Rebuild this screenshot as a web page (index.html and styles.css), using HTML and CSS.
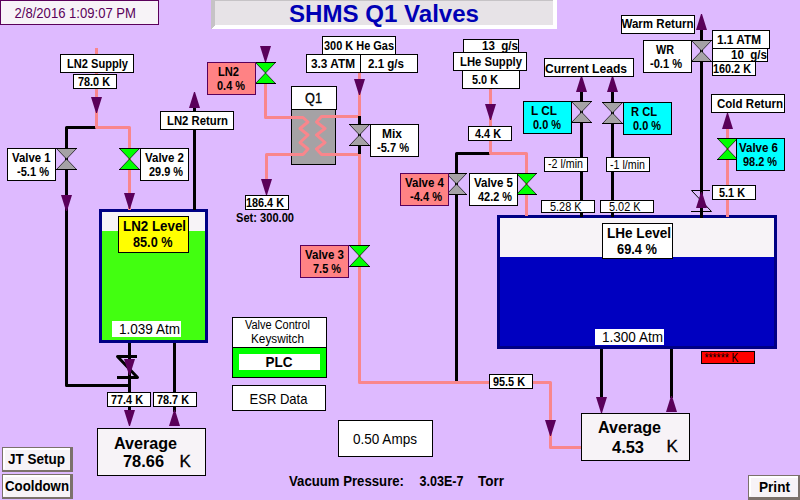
FILE: index.html
```html
<!DOCTYPE html>
<html lang="en">
<head>
<meta charset="utf-8">
<title>SHMS Q1 Valves</title>
<link rel="stylesheet" href="styles.css">
</head>
<body>
<svg class="mimic" width="800" height="500" viewBox="0 0 800 500">
  <defs>
    <path id="down" class="arrow" d="M-5.5 0H5.5L.5 16H-.5Z"/>
    <path id="up" class="arrow" d="M-5.5 16H5.5L.5 0H-.5Z"/>
    <g id="valve">
      <path d="M-10 0H10L-10 21H10Z"/>
      <path class="edge" d="M-10.5 0H10.5M-10.5 21H10.5"/>
    </g>
  </defs>

  <!-- Title bar -->
  <g class="shapes">
    <rect class="pale purple-line" x=".5" y=".5" width="158" height="24"/>
    <path fill="#c6c3c6" d="M211 0H557V29H211Z"/>
    <path fill="#fff" d="M211 29L215 25H553V0H557V29Z"/>
    <rect fill="#e7e3e7" x="215" y="1" width="338" height="24"/>
  </g>
  <text class="date" x="14.5" y="17.500" textLength="121.500">2/8/2016 1:09:07 PM</text>
  <text class="title" x="289" y="22" textLength="190">SHMS Q1 Valves</text>

  <!-- Tanks -->
  <g class="shapes">
    <rect fill="#000084" x="99" y="209" width="109" height="134"/>
    <rect fill="#f7f3f7" x="102" y="212" width="103" height="128"/>
    <rect fill="#42ff10" x="102" y="231" width="103" height="109"/>
    <rect fill="#000084" x="497" y="215" width="280" height="134"/>
    <rect fill="#f7f3f7" x="500" y="218" width="274" height="128"/>
    <rect fill="#0000c0" x="500" y="257" width="274" height="89"/>
    <rect fill="#a5a2a5" stroke="#000" x="291.500" y="109.500" width="44" height="55"/>
  </g>

  <!-- Pipes -->
  <g class="pipe cold">
    <path d="M96.500 127.500H66.500V385.500H129.500"/>
    <path d="M194.500 107V210M129.500 343V412M174.500 343V412"/>
    <path d="M490.500 153.500H456.500V382"/>
    <path d="M581.500 92V217M612.500 92V217M701.500 29V218"/>
    <path d="M601.500 349V398M671.500 349V398"/>
    <path d="M137 356.500H117.500L137.500 377.500H117"/>
  </g>
  <g class="pipe supply">
    <path d="M96.500 48V127.500H129.500V210"/>
    <path d="M265.500 84V117.500H303L308 122L300 128.500L308 135L300 142.500L308 149L303 154.500H266.500V180"/>
    <path d="M359.500 72V116.500H321.500L316.500 122L325 128.500L316.500 135L325 142.500L316.500 149L321.500 154.500H359.500V382.500H550.500V447.500H581"/>
    <path d="M490.500 88V153.500H526.500V216M727.500 128V217"/>
  </g>
  <path class="edge" fill="none" d="M710 190.500H691.500L711.500 211.500H691"/>
  <path class="pipe cold" d="M359.500 116V154"/>

  <!-- Flow arrows -->
  <use href="#down" x="96.500" y="97"/><use href="#down" x="265.500" y="46"/>
  <use href="#down" x="359.500" y="79"/><use href="#down" x="490.500" y="104"/>
  <use href="#down" x="66.500" y="195"/><use href="#down" x="129.500" y="193"/>
  <use href="#down" x="266.500" y="179"/><use href="#down" x="129.500" y="359"/>
  <use href="#down" x="129.500" y="410"/><use href="#down" x="550.500" y="420"/>
  <use href="#down" x="601.500" y="397"/>
  <use href="#up" x="194.500" y="92"/><use href="#up" x="581.500" y="76"/>
  <use href="#up" x="612.500" y="76"/><use href="#up" x="701.500" y="14"/>
  <use href="#up" x="727.500" y="113"/><use href="#up" x="701.500" y="192"/>
  <use href="#up" x="174.500" y="410"/><use href="#up" x="671.500" y="396"/>

  <!-- Valves -->
  <g class="closed">
    <use href="#valve" x="66.500" y="148.500"/><use href="#valve" x="359.500" y="124.500"/>
    <use href="#valve" x="456.500" y="173.500"/><use href="#valve" x="581.500" y="101.500"/>
    <use href="#valve" x="612.500" y="102.500"/><use href="#valve" x="701.500" y="40.500"/>
  </g>
  <g class="open">
    <use href="#valve" x="129.500" y="148.500"/><use href="#valve" x="265.500" y="62.500"/>
    <use href="#valve" x="359.500" y="245.500"/><use href="#valve" x="526.500" y="173.500"/>
    <use href="#valve" x="727.500" y="138.500"/>
  </g>

  <!-- Label boxes -->
  <g class="shapes box">
    <rect x="60.500" y="54.500" width="73" height="18"/>
    <rect x="73.500" y="74.500" width="43" height="14"/>
    <rect x="160.500" y="111.500" width="73" height="18"/>
    <rect x="7.500" y="148.500" width="48" height="32"/>
    <rect x="140.500" y="148.500" width="48" height="32"/>
    <rect class="yellow" x="118.500" y="216.500" width="70" height="36"/>
    <rect class="bare" x="112" y="321" width="69" height="16"/>
    <rect x="107.500" y="392.500" width="43" height="14"/>
    <rect x="153.500" y="392.500" width="43" height="14"/>
    <rect class="pale" x="97.500" y="428.500" width="108" height="47"/>

    <rect class="alarm" x="207.500" y="62.500" width="48" height="32"/>
    <rect x="291.500" y="86.500" width="45" height="23"/>
    <rect x="322.500" y="36.500" width="73" height="18"/>
    <rect x="306.500" y="54.500" width="54" height="18"/>
    <rect x="360.500" y="54.500" width="57" height="18"/>
    <rect x="370.500" y="124.500" width="48" height="32"/>
    <rect x="245.500" y="195.500" width="43" height="14"/>
    <rect class="alarm" x="300.500" y="245.500" width="48" height="32"/>

    <rect x="463.500" y="39.500" width="55" height="14"/>
    <rect x="462.500" y="70.500" width="57" height="18"/>
    <rect x="453.500" y="52.500" width="73" height="18"/>
    <rect x="468.500" y="126.500" width="43" height="14"/>
    <rect class="alarm" x="400.500" y="173.500" width="48" height="32"/>
    <rect x="469.500" y="173.500" width="48" height="32"/>
    <rect x="544.500" y="58.500" width="89" height="18"/>
    <rect class="cyan" x="523.500" y="101.500" width="48" height="32"/>
    <rect class="cyan" x="623.500" y="102.500" width="48" height="32"/>
    <rect x="544.500" y="157.500" width="43" height="14"/>
    <rect x="606.500" y="157.500" width="43" height="14"/>
    <rect x="541.500" y="200.500" width="53" height="12"/>
    <rect x="600.500" y="200.500" width="53" height="12"/>

    <rect x="621.500" y="15.500" width="73" height="18"/>
    <rect x="643.500" y="40.500" width="48" height="32"/>
    <rect x="712.500" y="61.500" width="43" height="14"/>
    <rect x="712.500" y="48.500" width="55" height="13"/>
    <rect x="712.500" y="30.500" width="57" height="18"/>
    <rect x="711.500" y="94.500" width="73" height="18"/>
    <rect class="cyan" x="736.500" y="138.500" width="48" height="32"/>
    <rect x="712.500" y="185.500" width="43" height="14"/>

    <rect x="602.500" y="223.500" width="70" height="35"/>
    <rect class="bare" x="595" y="329" width="69" height="16"/>
    <rect class="red" x="701.500" y="351.500" width="53" height="12"/>
    <rect x="489.500" y="374.500" width="43" height="14"/>
    <rect class="pale" x="581.500" y="413.500" width="108" height="47"/>

    <rect x="232.500" y="317.500" width="94" height="30"/>
    <rect class="green" x="232.500" y="347.500" width="94" height="30"/>
    <rect class="bare" x="239" y="354" width="81" height="16"/>
    <rect x="232.500" y="385.500" width="93" height="25"/>
    <rect x="338.500" y="420.500" width="94" height="36"/>
  </g>

  <!-- Operator buttons -->
  <g class="shapes button">
    <path class="face" d="M2 447H73V472H2Z"/><path class="shade" d="M2 447H73V472H2ZM3 448V470H70V448Z"/><path class="light" d="M3 448H70V450H5V469H3Z"/>
    <path class="face" d="M2 474H73V499H2Z"/><path class="shade" d="M2 474H73V499H2ZM3 475V497H70V475Z"/><path class="light" d="M3 475H70V477H5V496H3Z"/>
    <path class="face" d="M748 475H800V500H748Z"/><path class="shade" d="M748 475H800V500H748ZM749 476V497H798V476Z"/><path class="light" d="M749 476H798V478H751V496H749Z"/>
  </g>

  <!-- Bold labels -->
  <g class="label">
    <text x="67" y="68" textLength="61">LN2 Supply</text>
    <text x="78" y="86" textLength="32">78.0 K</text>
    <text x="167" y="125" textLength="61">LN2 Return</text>
    <text x="12" y="162" textLength="38.500">Valve 1</text>
    <text x="17" y="176" textLength="32">-5.1 %</text>
    <text x="145" y="162" textLength="39">Valve 2</text>
    <text x="149" y="176" textLength="34">29.9 %</text>
    <text x="111" y="404" textLength="32">77.4 K</text>
    <text x="157" y="404" textLength="32">78.7 K</text>
    <text x="218" y="76" textLength="21">LN2</text>
    <text x="217" y="90" textLength="28">0.4 %</text>
    <text x="324" y="50" textLength="70">300 K He Gas</text>
    <text x="311" y="68" textLength="44">3.3 ATM</text>
    <text x="368" y="68" textLength="36">2.1 g/s</text>
    <text x="382" y="138" textLength="20">Mix</text>
    <text x="377" y="152" textLength="32">-5.7 %</text>
    <text x="246" y="207" textLength="38">186.4 K</text>
    <text x="236" y="222" textLength="58">Set: 300.00</text>
    <text x="305" y="259" textLength="39">Valve 3</text>
    <text x="313" y="273" textLength="28">7.5 %</text>
    <text x="482" y="50" textLength="36" xml:space="preserve">13  g/s</text>
    <text x="460" y="66" textLength="62">LHe Supply</text>
    <text x="472" y="84" textLength="26">5.0 K</text>
    <text x="475" y="138" textLength="26">4.4 K</text>
    <text x="405" y="187" textLength="39">Valve 4</text>
    <text x="410" y="201" textLength="32">-4.4 %</text>
    <text x="474" y="187" textLength="39">Valve 5</text>
    <text x="478" y="201" textLength="34">42.2 %</text>
    <text x="545" y="73" textLength="82">Current Leads</text>
    <text x="531" y="115" textLength="26">L CL</text>
    <text x="533" y="129" textLength="28">0.0 %</text>
    <text x="631" y="116" textLength="26">R CL</text>
    <text x="633" y="130" textLength="28">0.0 %</text>
    <text x="621.500" y="28" textLength="72">Warm Return</text>
    <text x="656" y="54" textLength="18">WR</text>
    <text x="650" y="68" textLength="32">-0.1 %</text>
    <text x="717" y="44" textLength="44">1.1 ATM</text>
    <text x="731" y="59" textLength="36" xml:space="preserve">10  g/s</text>
    <text x="713" y="73" textLength="38">160.2 K</text>
    <text x="717" y="108" textLength="66">Cold Return</text>
    <text x="739" y="152" textLength="39">Valve 6</text>
    <text x="743" y="166" textLength="34">98.2 %</text>
    <text x="719" y="197" textLength="26">5.1 K</text>
    <text x="493" y="386" textLength="32">95.5 K</text>
  </g>
  <g class="label large">
    <text x="123" y="231" textLength="63">LN2 Level</text>
    <text x="133" y="247" textLength="39.500">85.0 %</text>
    <text x="607" y="238" textLength="64">LHe Level</text>
    <text x="617" y="254" textLength="40">69.4 %</text>
    <text x="265.500" y="367" textLength="27">PLC</text>
    <text x="289" y="486" textLength="115">Vacuum Pressure:</text>
    <text x="419.500" y="486" textLength="44">3.03E-7</text>
    <text x="478" y="486" textLength="26">Torr</text>
    <text x="8" y="464" textLength="57">JT Setup</text>
    <text x="5" y="491" textLength="64">Cooldown</text>
    <text x="759" y="492" textLength="31">Print</text>
  </g>
  <g class="label average">
    <text x="114" y="449" textLength="63">Average</text>
    <text x="123" y="467" textLength="41">78.66</text>
    <text x="598" y="433" textLength="63">Average</text>
    <text x="612" y="452.500" textLength="32">4.53</text>
    <text class="unit" x="179.500" y="467">K</text>
    <text class="unit" x="666.500" y="451.500">K</text>
  </g>

  <!-- Regular labels -->
  <g class="plain">
    <text class="q1" x="305" y="103" textLength="17">Q1</text>
    <text x="119" y="334" textLength="61">1.039 Atm</text>
    <text x="602" y="342" textLength="61">1.300 Atm</text>
    <text x="249.500" y="404" textLength="58">ESR Data</text>
    <text x="353" y="444" textLength="64">0.50 Amps</text>
    <g class="small">
      <text x="245" y="329" textLength="65">Valve Control</text>
      <text x="251" y="343" textLength="53">Keyswitch</text>
      <text x="548" y="168" textLength="35">-2 l/min</text>
      <text x="610" y="169" textLength="35">-1 l/min</text>
      <text x="550" y="211" textLength="31.500">5.28 K</text>
      <text x="609" y="211" textLength="31.500">5.02 K</text>
      <text x="704.500" y="362" textLength="34">****** K</text>
    </g>
  </g>
</svg>
<script src="labels.js"></script>
</body>
</html>
```
FILE: labels.js
```js
// Scale the glyphs of every fixed-width label evenly instead of only their gaps.
document.querySelectorAll("text[textLength]").forEach(function (label) {
  label.setAttribute("lengthAdjust", "spacingAndGlyphs");
});
```
FILE: styles.css
```css
body {
  margin: 0;
  background: #debaff;
  overflow: hidden;
}

.mimic {
  display: block;
  font-family: "Liberation Sans", Arial, sans-serif;
}

.shapes {
  shape-rendering: crispEdges;
}

.date {
  font-size: 14.5px;
  fill: #5a005a;
}

.title {
  font-size: 23.5px;
  font-weight: bold;
  fill: #0000b5;
}

.pipe {
  fill: none;
  stroke-width: 3;
  stroke-linejoin: round;
}

.cold {
  stroke: #000;
}

.supply {
  stroke: #f9868c;
}

.arrow {
  fill: #5a005a;
}

.edge {
  stroke: #000;
  stroke-width: 1;
}

#valve {
  stroke: #000;
  stroke-width: 0.7;
}

.closed {
  fill: #a5a2a5;
}

.open {
  fill: #00ff00;
}

.box rect {
  fill: #fff;
  stroke: #000;
}

.box .bare {
  stroke: none;
}

.pale,
.box .pale {
  fill: #f7f3f7;
}

.purple-line {
  stroke: #5a005a;
}

.box .alarm {
  fill: #ff8284;
  stroke: #5a005a;
}

.box .cyan {
  fill: #00ffff;
}

.box .yellow {
  fill: #ffff00;
}

.box .green {
  fill: #00ff00;
}

.box .red {
  fill: #ff0000;
}

.face {
  fill: #f7f3f7;
}

.shade {
  fill: #7b716b;
  fill-rule: evenodd;
}

.light {
  fill: #fff;
}

.label {
  font-size: 12px;
  font-weight: bold;
}

.large {
  font-size: 14.5px;
}

.average {
  font-size: 17px;
}

.unit {
  font-weight: normal;
  stroke: #000;
  stroke-width: 0.3;
}

.plain {
  font-size: 15px;
}

.q1 {
  font-size: 15px;
  stroke: #000;
  stroke-width: 0.3;
}

.small {
  font-size: 12px;
}
```
